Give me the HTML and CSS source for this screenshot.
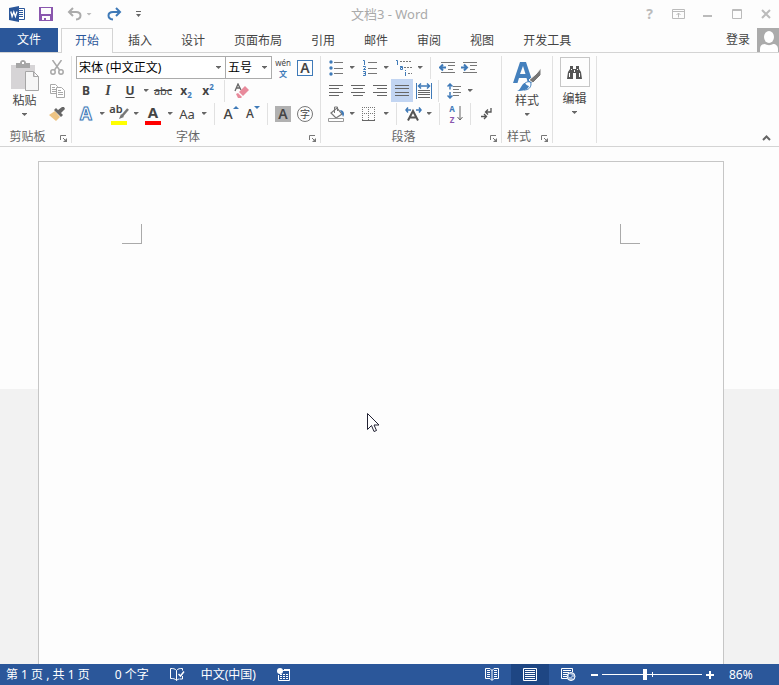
FILE: index.html
```html
<!DOCTYPE html>
<html lang="zh-CN">
<head>
    <meta charset="UTF-8">
    <meta name="viewport" content="width=device-width, initial-scale=1.0">
    <title>文档3 - Word</title>
    <link rel="stylesheet" href="styles.css">
</head>
<body>
    <header class="titlebar">
        <div class="quick">
            <svg class="logo" width="16" height="16" viewBox="0 0 16 16"><path fill="#2b579a" d="M0 2L10 0v16L0 14z"/><path fill="#fff" stroke="#2b579a" d="M9.500 2.500h6v11h-6z"/><path stroke="#2b579a" d="M10 4.500h4M10 6.500h4M10 8.500h4M10 10.500h4"/><path fill="none" stroke="#fff" stroke-width="1.300" d="M1.800 5.500l1.300 5L4.800 6l1.600 4.500L8 5.500"/></svg>
            <button class="tool" aria-label="保存"><svg width="14" height="14" viewBox="0 0 14 14"><path fill="#8a57ae" fill-rule="evenodd" d="M0 0h14v14H0zM2 1v6h10V1zM3 9v4h2v-2h2v2h4V9z"/></svg></button>
            <button class="tool undo" aria-label="撤消"><svg width="15" height="14" viewBox="0 0 15 14"><path fill="none" stroke="#ababab" stroke-width="2" d="M6 1L2 5l4 4M2 5h7c6 0 6 7 0 7.500"/></svg></button>
            <button class="caret light" aria-label="撤消列表"></button>
            <button class="tool redo" aria-label="恢复"><svg width="15" height="14" viewBox="0 0 15 14"><path fill="none" stroke="#3f7ab8" stroke-width="2" d="M9 1l4 4-4 4M13 5H6C0 5 0 12 6 12.500"/></svg></button>
            <button class="tool more" aria-label="自定义快速访问工具栏"><svg width="5" height="6" viewBox="0 0 5 6"><path fill="#666" d="M0 0h5v1H0zM0 3h5L2.500 6z"/></svg></button>
        </div>
        <h1>文档3 - Word</h1>
        <div class="window-buttons">
            <button aria-label="帮助">?</button>
            <button aria-label="功能区显示选项"><svg width="13" height="10" viewBox="0 0 13 10"><path fill="none" stroke="#bbb" d="M.5.5h12v9H.5zM.5 2.500h12M6.500 8.500V4M4.500 6l2-2 2 2"/></svg></button>
            <button aria-label="最小化"><svg width="9" height="10" viewBox="0 0 9 10"><path fill="#bbb" d="M0 6h9v2H0z"/></svg></button>
            <button aria-label="最大化"><svg width="10" height="10" viewBox="0 0 10 10"><path fill="none" stroke="#bbb" d="M.5.5h9v9H.5zM0 1.500h10"/></svg></button>
            <button aria-label="关闭"><svg width="10" height="10" viewBox="0 0 10 10"><path stroke="#bbb" stroke-width="2" d="M1 1l8 8M9 1L1 9"/></svg></button>
        </div>
    </header>

    <nav class="tabs">
        <button class="file">文件</button>
        <button class="tab active">开始</button>
        <button class="tab">插入</button>
        <button class="tab">设计</button>
        <button class="tab">页面布局</button>
        <button class="tab">引用</button>
        <button class="tab">邮件</button>
        <button class="tab">审阅</button>
        <button class="tab">视图</button>
        <button class="tab">开发工具</button>
        <button class="login">登录</button>
        <svg class="avatar" width="22" height="24" viewBox="0 0 22 24"><path fill="#ababab" d="M0 0h22v24H0z"/><ellipse cx="12" cy="9" rx="5" ry="6" fill="#fff"/><path fill="#fff" d="M3 24v-3c0-3 2-5 5-5 2 1.500 6 1.500 8 0 3 0 5 2 5 5v3z"/></svg>
    </nav>

    <main class="ribbon">
        <section class="group clipboard">
            <div class="group-body">
                <button class="big">
                    <svg width="28" height="32" viewBox="0 0 28 32"><path fill="#d6d4d6" d="M0 5h24v24H0z"/><path fill="#a6a6a6" d="M5 3h4c0-4 6-4 6 0h4v5H5z"/><path fill="#fff" d="M11 2h2v2h-2z"/><path fill="#f6f6f6" stroke="#a6a6a6" d="M14.500 11.500h8l5 5v14h-13zM22.500 11.500v5h5"/></svg>
                    <span>粘贴</span>
                    <i class="arrow"></i>
                </button>
                <div class="stack">
                    <button class="btn" aria-label="剪切"><svg width="14" height="15" viewBox="0 0 14 15"><g fill="none" stroke="#a8a8a8" stroke-width="1.500"><path d="M2.500 0L9.500 10M11.500 0L4.500 10"/><circle cx="3" cy="12" r="2.200"/><circle cx="11" cy="12" r="2.200"/></g></svg></button>
                    <button class="btn" aria-label="复制"><svg width="15" height="14" viewBox="0 0 15 14"><g fill="#fff" stroke="#a8a8a8"><path d="M.5.5h5l2 2v7h-7zM2 3.500h3M2 5.500h4M2 7.500h4"/><path d="M6.500 3.500h5l3 3v7h-8zM8 6.500h3M8 8.500h5M8 10.500h5"/></g></svg></button>
                    <button class="btn" aria-label="格式刷"><svg width="16" height="14" viewBox="0 0 16 14"><path fill="#edc484" d="M0 8l6-4 5 6-4 4z"/><path fill="#666" d="M5 3l2-2 2 2 4-3 2 0 1 2-4 4 2 2-2 2z"/></svg></button>
                </div>
            </div>
            <footer><span>剪贴板</span><button class="launcher" aria-label="剪贴板选项"><svg width="8" height="7" viewBox="0 0 8 7"><path fill="none" stroke="#777" d="M.5 5V.5H6M3 3l3 3"/><path fill="#777" d="M7 3v4H3z"/></svg></button></footer>
        </section>

        <section class="group font">
            <div class="group-body rows">
                <div class="row">
                    <label class="combo name"><select aria-label="字体"><option>宋体 (中文正文)</option></select></label>
                    <label class="combo size"><select aria-label="字号"><option>五号</option></select></label>
                    <button class="btn pinyin" aria-label="拼音指南"><small>wén</small><b>文</b></button>
                    <button class="btn" aria-label="字符边框"><span class="boxed">A</span></button>
                </div>
                <div class="row">
                    <button class="btn"><b>B</b></button>
                    <button class="btn italic"><b>I</b></button>
                    <button class="btn underline"><b>U</b></button>
                    <button class="caret" aria-label="下划线样式"></button>
                    <button class="btn wide strike">abc</button>
                    <button class="btn script"><b>x<sub>2</sub></b></button>
                    <button class="btn script"><b>x<sup>2</sup></b></button>
                    <i class="sep"></i>
                    <button class="btn" aria-label="清除所有格式"><svg width="15" height="16" viewBox="0 0 15 16"><path fill="none" stroke="#666" stroke-width="1.300" d="M1 8L4 1l3 6M2 5h4"/><path fill="#e88a9b" d="M5 9l6-6 4 4-6 6z"/><path fill="#e88a9b" d="M2 11l2-1 4 4-1 1H4z"/></svg></button>
                </div>
                <div class="row">
                    <button class="btn outline-a">A</button>
                    <button class="caret" aria-label="文本效果"></button>
                    <button class="btn wide mark" aria-label="突出显示"><span>ab</span><svg width="10" height="11" viewBox="0 0 10 11"><path stroke="#777" stroke-width="2.500" d="M9 1L3 8"/><path fill="#777" d="M2 6l3 3-5 2z"/></svg></button>
                    <button class="caret" aria-label="突出显示颜色"></button>
                    <button class="btn wide color"><b>A</b></button>
                    <button class="caret" aria-label="字体颜色"></button>
                    <button class="btn wide case">Aa</button>
                    <button class="caret" aria-label="更改大小写"></button>
                    <i class="sep"></i>
                    <button class="btn grow" aria-label="增大字号">A<svg width="6" height="3" viewBox="0 0 6 3"><path fill="#3f7ab8" d="M3 0l3 3H0z"/></svg></button>
                    <button class="btn grow small" aria-label="减小字号">A<svg width="6" height="3" viewBox="0 0 6 3"><path fill="#3f7ab8" d="M0 0h6L3 3z"/></svg></button>
                    <i class="sep narrow"></i>
                    <button class="btn" aria-label="字符底纹"><span class="shaded">A</span></button>
                    <button class="btn" aria-label="带圈字符"><span class="circled">字</span></button>
                </div>
            </div>
            <footer><span>字体</span><button class="launcher" aria-label="字体选项"><svg width="8" height="7" viewBox="0 0 8 7"><path fill="none" stroke="#777" d="M.5 5V.5H6M3 3l3 3"/><path fill="#777" d="M7 3v4H3z"/></svg></button></footer>
        </section>

        <section class="group paragraph">
            <div class="group-body rows">
                <div class="row">
                    <button class="btn" aria-label="项目符号"><svg width="14" height="16" viewBox="0 0 14 16"><g fill="#3f7ab8"><circle cx="2" cy="2" r="1.700"/><circle cx="2" cy="8" r="1.700"/><circle cx="2" cy="14" r="1.700"/></g><path stroke="#777" d="M5 2.500h9M5 8.500h9M5 13.500h9"/></svg></button>
                    <button class="caret" aria-label="项目符号库"></button>
                    <button class="btn wide" aria-label="编号"><svg width="15" height="16" viewBox="0 0 15 16"><path fill="none" stroke="#3f7ab8" d="M1 .5h1.500V5M1 6.500h2.500v1L1.500 9.500H4M1 11.500h2.500v4H1M1.500 13.500h2"/><path stroke="#777" d="M6 2.500h9M6 8.500h9M6 13.500h9"/></svg></button>
                    <button class="caret" aria-label="编号库"></button>
                    <button class="btn wide" aria-label="多级列表"><svg width="17" height="16" viewBox="0 0 17 16"><path fill="none" stroke="#3f7ab8" d="M1 .5h1.500V5M5 6.500h2.500v3H5.500v-2h2M10.500 12v4M10.500 10v1"/><path stroke="#777" stroke-dasharray="2 1" d="M5 1.500h12M9 7.500h8M13 13.500h4"/></svg></button>
                    <button class="caret" aria-label="多级列表库"></button>
                    <i class="sep"></i>
                    <button class="btn" aria-label="减少缩进量"><svg width="16" height="12" viewBox="0 0 16 12"><path stroke="#777" d="M2 .5h14M9 3.500h7M9 7.500h5M2 10.500h14"/><path fill="none" stroke="#3f7ab8" stroke-width="2" d="M7 5.500H1M4 2.500l-3 3 3 3"/></svg></button>
                    <button class="btn" aria-label="增加缩进量"><svg width="16" height="12" viewBox="0 0 16 12"><path stroke="#777" d="M2 .5h14M9 3.500h7M9 7.500h5M2 10.500h14"/><path fill="none" stroke="#3f7ab8" stroke-width="2" d="M0 5.500h6M3 2.500l3 3-3 3"/></svg></button>
                </div>
                <div class="row">
                    <button class="btn" aria-label="左对齐"><svg width="14" height="11" viewBox="0 0 14 11"><path stroke="#666" d="M0 .5h14M0 3.500h10M0 7.500h14M0 10.500h10"/></svg></button>
                    <button class="btn" aria-label="居中"><svg width="14" height="11" viewBox="0 0 14 11"><path stroke="#666" d="M0 .5h14M2 3.500h10M0 7.500h14M2 10.500h10"/></svg></button>
                    <button class="btn" aria-label="右对齐"><svg width="14" height="11" viewBox="0 0 14 11"><path stroke="#666" d="M0 .5h14M4 3.500h10M0 7.500h14M4 10.500h10"/></svg></button>
                    <button class="btn pressed" aria-label="两端对齐" aria-pressed="true"><svg width="14" height="11" viewBox="0 0 14 11"><path stroke="#666" d="M0 .5h14M0 3.500h14M0 7.500h14M0 10.500h14"/></svg></button>
                    <button class="btn" aria-label="分散对齐"><svg width="16" height="16" viewBox="0 0 16 16"><path stroke="#3f7ab8" d="M.5 0v16M15.500 0v16"/><path fill="none" stroke="#3f7ab8" stroke-width="1.500" d="M3 3h10M5 .5L2.500 3 5 5.500M11 .5L13.500 3 11 5.500"/><path stroke="#666" d="M2 7.500h12M2 9.500h12M2 11.500h12M2 14.500h12"/></svg></button>
                    <i class="sep narrow"></i>
                    <button class="btn" aria-label="行和段落间距"><svg width="14" height="16" viewBox="0 0 14 16"><path fill="none" stroke="#3f7ab8" stroke-width="1.500" d="M3 1v5.500M.5 3.500L3 1l2.500 2.500M3 9v6M.5 12.500L3 15l2.500-2.500"/><path stroke="#777" d="M6 3.500h8M6 6.500h6M6 9.500h8M6 12.500h6"/></svg></button>
                    <button class="caret" aria-label="间距选项"></button>
                </div>
                <div class="row">
                    <button class="btn" aria-label="底纹"><svg width="17" height="16" viewBox="0 0 17 16"><path fill="#fff" stroke="#777" stroke-width="1.200" d="M3 7l6-5 5 6-6 4z"/><path fill="none" stroke="#777" d="M6.500 7V1h3v4"/><path fill="#3f7ab8" d="M12 4c4 0 5 4 3 7l-1-3z"/><path fill="#fff" stroke="#999" d="M.5 12.500h15v3H.5z"/></svg></button>
                    <button class="caret" aria-label="底纹颜色"></button>
                    <button class="btn wide" aria-label="边框"><svg width="14" height="14" viewBox="0 0 14 14"><path fill="none" stroke="#777" stroke-dasharray="1 1" d="M0 .5h13M0 6.500h13M.5 0v13M6.500 0v13M12.500 0v13"/><path stroke="#666" d="M0 13.500h13"/></svg></button>
                    <button class="caret" aria-label="边框样式"></button>
                    <i class="sep"></i>
                    <button class="btn" aria-label="中文版式"><svg width="17" height="14" viewBox="0 0 17 14"><path fill="none" stroke="#555" stroke-width="2" d="M3 13.500L8 4l5 9.500M5 10.500h6"/><path fill="none" stroke="#3f7ab8" stroke-width="1.500" d="M6 3H1M3 .5L1 3l2 2.500M11 3h5M14 .5L16 3l-2 2.500"/></svg></button>
                    <button class="caret" aria-label="中文版式选项"></button>
                    <i class="sep"></i>
                    <button class="btn sort" aria-label="排序"><span><b>A</b><b>Z</b></span><svg width="6" height="15" viewBox="0 0 6 15"><path fill="none" stroke="#666" d="M3 0v14M.5 11L3 14l2.500-3"/></svg></button>
                    <i class="sep narrow"></i>
                    <button class="btn" aria-label="显示编辑标记"><svg width="11" height="12" viewBox="0 0 11 12"><path fill="none" stroke="#555" stroke-width="1.300" d="M10 0v4H5M7 1.500L4.500 4 7 6.500M0 8.500h5M3 6l2.500 2.500L3 11"/></svg></button>
                </div>
            </div>
            <footer><span>段落</span><button class="launcher" aria-label="段落选项"><svg width="8" height="7" viewBox="0 0 8 7"><path fill="none" stroke="#777" d="M.5 5V.5H6M3 3l3 3"/><path fill="#777" d="M7 3v4H3z"/></svg></button></footer>
        </section>

        <section class="group styles">
            <div class="group-body">
                <button class="big">
                    <svg width="28" height="32" viewBox="0 0 28 32"><path fill="#4480bd" fill-rule="evenodd" d="M0 23L7 2h6l7 21h-5l-1.500-5H6l-1.500 5zM7 14h5.500L10 6z"/><path fill="#777" stroke="#fdfdfd" d="M16 20l7-6 5-6v7l-8 8z"/><path fill="#fff" stroke="#4480bd" d="M11 24c3-3 7-3 7 0s-2 6-7 6z"/><path fill="#4480bd" d="M4 31c4-1 4-7 8-8 1 2 3 3 4 3-1 4-6 5-12 5z"/></svg>
                    <span>样式</span>
                    <i class="arrow"></i>
                </button>
            </div>
            <footer><span>样式</span><button class="launcher" aria-label="样式选项"><svg width="8" height="7" viewBox="0 0 8 7"><path fill="none" stroke="#777" d="M.5 5V.5H6M3 3l3 3"/><path fill="#777" d="M7 3v4H3z"/></svg></button></footer>
        </section>

        <section class="group editing">
            <div class="group-body">
                <button class="big">
                    <span class="frame"><svg width="15" height="14" viewBox="0 0 15 14"><path fill="#555" d="M3 1h3v3h3V1h3v3l2 3 1 7H9V8H6v6H0l1-7 2-3z"/><path fill="#fff" d="M2 8h1v4H2zM12 8h1v4h-1zM4 4h1v1H4zM10 4h1v1h-1zM7 5h1v2H7z"/></svg></span>
                    <span>编辑</span>
                    <i class="arrow"></i>
                </button>
            </div>
        </section>
        <button class="collapse" aria-label="折叠功能区"><svg width="9" height="6" viewBox="0 0 9 6"><path fill="none" stroke="#666" stroke-width="2" d="M1 5l3.500-3.500L8 5"/></svg></button>
    </main>

    <div class="workspace">
        <article class="page">
            <i class="corner left"></i>
            <i class="corner right"></i>
        </article>
        <svg class="cursor" width="13" height="20" viewBox="0 0 13 20"><path fill="#fff" stroke="#223" d="M.5.5v16l4-4 2.500 6 2.500-1-2.500-5.500h5z"/></svg>
    </div>

    <footer class="statusbar">
        <span class="pages">第 1 页 , 共 1 页</span>
        <span class="words">0 个字</span>
        <button class="proof" aria-label="校对"><svg width="15" height="13" viewBox="0 0 15 13"><path fill="none" stroke="#fff" d="M6.500 2.500C5 .5 3 .5.500.5v10c2.500 0 4.500 0 6 2 1-1 2-1.500 3-1.500M6.500 2.500v10M6.500 2.500C8 .5 10 .5 12.500.5v2M12.500 8v3H10"/><path fill="none" stroke="#fff" stroke-width="1.500" d="M8.500 6l2 2L14 3.500"/></svg></button>
        <span class="language">中文(中国)</span>
        <button aria-label="宏录制"><svg width="13" height="13" viewBox="0 0 13 13"><path fill="none" stroke="#fff" d="M6 2.500h6.500v10h-11V7"/><path stroke="#fff" stroke-width="2" d="M7 2h6"/><path stroke="#fff" stroke-dasharray="2 1" d="M3 6.500h9M3 8.500h9M3 10.500h9"/><circle cx="3" cy="3" r="3" fill="#fff"/></svg></button>
        <div class="views">
            <button class="view" aria-label="阅读视图"><svg width="14" height="13" viewBox="0 0 14 13"><path fill="none" stroke="#fff" d="M7 2.500L5 .5H.5v10H5l2 2 2-2h4.500V.5H9zM7 2v10M2 2.500h3M2 4.500h3M2 6.500h3M2 8.500h3M9 2.500h3M9 4.500h3M9 6.500h3M9 8.500h3"/></svg></button>
            <button class="view current" aria-label="页面视图"><svg width="14" height="13" viewBox="0 0 14 13"><path fill="none" stroke="#fff" d="M.5.5h13v12H.5zM2 2.500h10M2 4.500h10M2 6.500h10M2 8.500h10M2 10.500h10"/></svg></button>
            <button class="view" aria-label="Web 版式视图"><svg width="15" height="13" viewBox="0 0 15 13"><path fill="none" stroke="#fff" d="M6 10.500H.5V.5h11V4M2 2.500h8M2 4.500h6M2 6.500h4M2 8.500h4"/><circle cx="10" cy="8.500" r="4" fill="#9db5d8" stroke="#fff"/><path fill="#2b579a" d="M8 6l3 1-1 2H8zM11 9l2 0-1 2z"/></svg></button>
        </div>
        <button aria-label="缩小"><svg width="7" height="8" viewBox="0 0 7 8"><path fill="#fff" d="M0 3h7v2H0z"/></svg></button>
        <input class="zoom" type="range" min="0" max="100" value="43" aria-label="显示比例">
        <button aria-label="放大"><svg width="8" height="8" viewBox="0 0 8 8"><path fill="#fff" d="M0 3h3V0h2v3h3v2H5v3H3V5H0z"/></svg></button>
        <span class="percent">86%</span>
    </footer>
</body>
</html>
```

FILE: styles.css
```css
* {
    box-sizing: border-box;
}
body {
    display: flex;
    flex-direction: column;
    height: 100vh;
    margin: 0;
    overflow: hidden;
    background: #fdfdfd;
    color: #444;
    font: 12px/16px "Noto Sans", "Noto Sans CJK SC", sans-serif;
}
button {
    display: flex;
    align-items: center;
    justify-content: center;
    flex: none;
    padding: 0;
    border: 0;
    background: none;
    color: inherit;
    font: inherit;
}
svg {
    display: block;
    flex: none;
}

/* Title bar */
.titlebar {
    display: grid;
    grid-template-columns: 1fr auto 1fr;
    align-items: center;
    height: 28px;
}
.titlebar h1 {
    margin: 0;
    color: #aaa;
    font-size: 13px;
    font-weight: normal;
}
.quick {
    display: flex;
    align-items: center;
    padding-left: 9px;
}
.quick .tool {
    margin-left: 14px;
}
.quick .undo + .caret {
    margin-left: 2px;
}
.quick .redo {
    margin-left: 13px;
}
.window-buttons {
    display: flex;
    justify-content: flex-end;
    padding-right: 3px;
    color: #bbb;
}
.window-buttons button {
    width: 29px;
    height: 20px;
    font-size: 14px;
    font-weight: bold;
}
.window-buttons button:last-child {
    width: 20px;
    margin-left: 5px;
}

/* Tabs */
.tabs {
    display: flex;
    gap: 1px;
    height: 25px;
    border-bottom: 1px solid #d4d4d4;
}
.file {
    width: 58px;
    margin-right: 2px;
    background: #2b579a;
    color: #fff;
}
.tab {
    padding: 0 13px;
    border: 1px solid transparent;
    border-bottom: 0;
}
.tab.active {
    height: 25px;
    border-color: #d4d4d4;
    background: #fdfdfd;
    color: #2b579a;
}
.login {
    margin-left: auto;
    margin-right: 6px;
}

/* Ribbon */
.ribbon {
    display: flex;
    height: 94px;
    padding: 3px 0;
    border-bottom: 1px solid #d4d4d4;
}
.group {
    display: flex;
    flex-direction: column;
    height: 87px;
    padding: 0 3px;
    border-right: 1px solid #e1e1e1;
}
.group-body {
    display: flex;
    height: 69px;
}
.group footer {
    display: flex;
    align-items: center;
    height: 18px;
    padding-top: 6px;
    color: #666;
}
.group footer span {
    flex: 1;
    padding-right: 8px;
    text-align: center;
}
.launcher {
    margin-top: 3px;
}
.clipboard {
    width: 72px;
}
.font {
    width: 249px;
}
.paragraph {
    width: 181px;
    padding-left: 4px;
}
.styles {
    width: 51px;
}
.editing {
    width: 44px;
}
.rows,
.big {
    flex-direction: column;
}
.row {
    display: flex;
    align-items: center;
    height: 23px;
}
.big {
    flex: 1;
    justify-content: flex-start;
    padding-top: 4px;
}
.big span {
    margin-top: 1px;
}
.big .frame {
    display: flex;
    align-items: center;
    justify-content: center;
    width: 30px;
    height: 30px;
    border: 1px solid #c6c6c6;
}
.editing .big {
    padding-top: 0;
}
.editing .big span + span {
    margin-top: 4px;
}
.arrow,
.caret::before {
    width: 5px;
    height: 3px;
    background: #666;
    clip-path: polygon(0 0, 100% 0, 100% 20%, 50% 100%, 0 20%);
}
.caret::before {
    content: "";
}
.caret.light::before {
    background: #bbb;
}
.arrow {
    margin-top: 4px;
}
.btn {
    width: 22px;
    height: 23px;
}
.caret {
    width: 10px;
    height: 23px;
}
.btn.wide {
    width: 24px;
}
.btn.pressed {
    background: #c2d5f2;
}
.sep {
    width: 1px;
    height: 22px;
    margin: 0 5px;
    background: #e1e1e1;
}
.sep.narrow {
    margin: 0 4px 0 3px;
}

/* Font group */
.combo {
    display: flex;
    align-items: center;
    height: 23px;
    border: 1px solid #ababab;
    background: #fff;
}
.combo.name {
    width: 150px;
    margin-left: 1px;
}
.combo.size {
    width: 47px;
    margin-left: -1px;
}
.combo select {
    flex: 1;
    min-width: 0;
    padding: 0 0 0 2px;
    border: 0;
    appearance: none;
    background: none;
    color: #000;
    font: inherit;
}
.combo::after {
    content: "";
    width: 5px;
    height: 3px;
    margin-right: 4px;
    background: #666;
    clip-path: polygon(0 0, 100% 0, 100% 20%, 50% 100%, 0 20%);
}
.pinyin {
    flex-direction: column;
}
.pinyin small,
.pinyin b {
    font-size: 8px;
    line-height: 11px;
}
.pinyin b {
    color: #3f7ab8;
}
.boxed,
.shaded {
    width: 16px;
    height: 16px;
    font-size: 14px;
    font-weight: 600;
    line-height: 14px;
}
.boxed {
    border: 1px solid #3f7ab8;
}
.shaded {
    background: #b1b1b1;
    line-height: 16px;
}
.circled {
    width: 16px;
    height: 16px;
    border: 1px solid #777;
    border-radius: 50%;
    font-size: 10px;
    line-height: 14px;
}
.italic {
    font-family: "Liberation Serif", serif;
    font-size: 14px;
    font-style: italic;
}
.underline {
    text-decoration: underline;
    text-underline-offset: 2px;
}
.strike {
    font-size: 11px;
    text-decoration: line-through;
}
.script b {
    line-height: 12px;
}
.script sub,
.script sup {
    color: #3f7ab8;
    font-size: 8px;
    line-height: 0;
}
.outline-a {
    color: #fff;
    font-size: 17px;
    font-weight: bold;
    -webkit-text-stroke: 1px #3f7ab8;
    text-shadow: 0 0 2px #9dc0e6;
}
.mark,
.color {
    align-items: flex-start;
    background: linear-gradient(#ff0, #ff0) 50% 19px / 16px 4px no-repeat;
}
.mark span {
    font-size: 11px;
    font-weight: 600;
    line-height: 14px;
}
.mark svg {
    margin: 6px 0 0 -4px;
}
.color {
    background-image: linear-gradient(#f00, #f00);
    font-size: 15px;
    line-height: 20px;
}
.case {
    font-size: 13px;
}
.grow {
    font-size: 14px;
    font-weight: 500;
}
.grow.small {
    font-size: 12px;
}
.grow svg {
    align-self: flex-start;
    margin-top: 4px;
}

/* Paragraph group */
.sort span {
    display: flex;
    flex-direction: column;
    color: #8a57ae;
    font-size: 8px;
    line-height: 11px;
}
.sort b:first-child {
    color: #3f7ab8;
}
.sort svg {
    margin-left: 2px;
}
.collapse {
    align-self: flex-end;
    margin: 0 8px 2px auto;
}

/* Document */
.workspace {
    position: relative;
    display: flex;
    flex: 1;
    min-height: 0;
    padding: 14px 55px 0 38px;
    background: linear-gradient(#fdfdfd 242px, #f2f2f2 242px);
}
.page {
    display: flex;
    flex: 1;
    justify-content: space-between;
    padding: 62px 83px 0;
    border: 1px solid #c6c6c6;
    border-bottom: 0;
    background: #fdfdfd;
}
.corner {
    width: 20px;
    height: 20px;
    border-bottom: 1px solid #aaa;
}
.corner.left {
    border-right: 1px solid #aaa;
}
.corner.right {
    border-left: 1px solid #aaa;
}
.cursor {
    position: absolute;
    top: 266px;
    left: 367px;
}

/* Status bar */
.statusbar {
    display: flex;
    align-items: center;
    height: 21px;
    padding-left: 6px;
    background: #2b579a;
    color: #fff;
}
.words {
    margin-left: 25px;
}
.proof {
    margin: 0 16px 0 21px;
}
.language {
    margin-right: 21px;
}
.views {
    display: flex;
    margin: 0 4px 0 auto;
}
.view {
    width: 38px;
    height: 21px;
}
.view.current {
    background: #1e4683;
}
.zoom {
    width: 100px;
    height: 12px;
    margin: 0 4px;
    appearance: none;
    background:
        linear-gradient(#fff, #fff) 50% 50% / 1px 5px no-repeat,
        linear-gradient(#fff, #fff) 0 50% / 100% 1px no-repeat;
}
.zoom::-webkit-slider-thumb {
    width: 4px;
    height: 11px;
    appearance: none;
    background: #fff;
}
.percent {
    width: 50px;
    margin-left: 15px;
}
```
